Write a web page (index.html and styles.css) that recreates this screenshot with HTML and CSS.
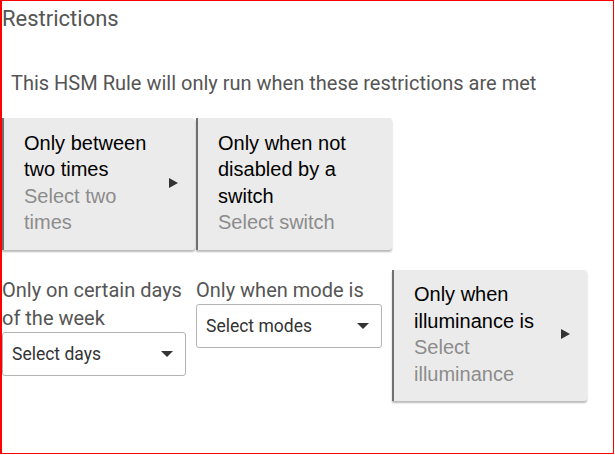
FILE: index.html
```html
<!DOCTYPE html>
<html>
<head>
<meta charset="utf-8">
<link rel="stylesheet" href="styles.css">
</head>
<body>
<div class="frame">
  <h2 class="title">Restrictions</h2>
  <p class="intro">This HSM Rule will only run when these restrictions are met</p>
  <div class="grid row1">
    <div class="card">
      <div class="card-text">
        <div class="card-title">Only between two times</div>
        <div class="card-sub">Select two times</div>
      </div>
      <span class="arrow"></span>
    </div>
    <div class="card">
      <div class="card-text">
        <div class="card-title">Only when not disabled by a switch</div>
        <div class="card-sub">Select switch</div>
      </div>
    </div>
  </div>
  <div class="grid row2">
    <div class="field">
      <label class="field-label">Only on certain days of the week</label>
      <div class="select"><span>Select days</span><span class="caret"></span></div>
    </div>
    <div class="field field-b">
      <label class="field-label">Only when mode is</label>
      <div class="select"><span>Select modes</span><span class="caret"></span></div>
    </div>
    <div class="card card-c">
      <div class="card-text">
        <div class="card-title">Only when illuminance is</div>
        <div class="card-sub">Select illuminance</div>
      </div>
      <span class="arrow"></span>
    </div>
  </div>
</div>
</body>
</html>
```

FILE: styles.css
```css
html, body {
  margin: 0;
  padding: 0;
  background: #fff;
}
.frame {
  box-sizing: border-box;
  width: 614px;
  height: 454px;
  border: 1px solid #ff0000;
  border-left-width: 2px;
  padding: 0;
  font-family: Roboto, "Liberation Sans", sans-serif;
  overflow: hidden;
}
.title {
  margin: 5px 0 0 0;
  font-size: 22px;
  line-height: 26px;
  font-weight: 400;
  color: #555;
}
.intro {
  margin: 39px 0 0 9px;
  font-size: 20px;
  line-height: 24px;
  color: #555;
}
.grid {
  display: grid;
  grid-template-columns: 194px 196px 195px;
  column-gap: 0;
  align-items: start;
}
.row1 {
  margin-top: 23px;
}
.row2 {
  margin-top: 20px;
}
.card {
  box-sizing: border-box;
  display: flex;
  align-items: center;
  justify-content: space-between;
  background: #ebebeb;
  border-left: 2px solid #6f6f6f;
  border-radius: 0 3px 3px 0;
  box-shadow: 0 2px 2px rgba(0, 0, 0, 0.28);
  padding: 11px 17px 14px 20px;
  font-family: "Liberation Sans", Arial, sans-serif;
  font-size: 20px;
  line-height: 26.5px;
  min-height: 132px;
}
.row1 .card:first-child {
  margin-right: 1px;
}
.card-text {
  flex: 1;
}
.card-title {
  color: #000;
}
.card-sub {
  color: #8c8c8c;
}
.arrow {
  width: 0;
  height: 0;
  border-top: 5px solid transparent;
  border-bottom: 5px solid transparent;
  border-left: 9px solid #333;
  margin-left: 8px;
}
.card-c {
  min-height: 131px;
  width: 195px;
}
.field {
  padding-top: 6px;
  padding-right: 10px;
}
.field-label {
  display: block;
  font-size: 20px;
  line-height: 28px;
  color: #555;
}
.select {
  box-sizing: border-box;
  height: 44px;
  display: flex;
  align-items: center;
  justify-content: space-between;
  border: 1px solid #b3b3b3;
  border-radius: 3px;
  padding: 0 12px 0 9px;
  font-size: 17.5px;
  color: #333;
}
.caret {
  width: 0;
  height: 0;
  border-left: 6px solid transparent;
  border-right: 6px solid transparent;
  border-top: 6px solid #333;
}
```
